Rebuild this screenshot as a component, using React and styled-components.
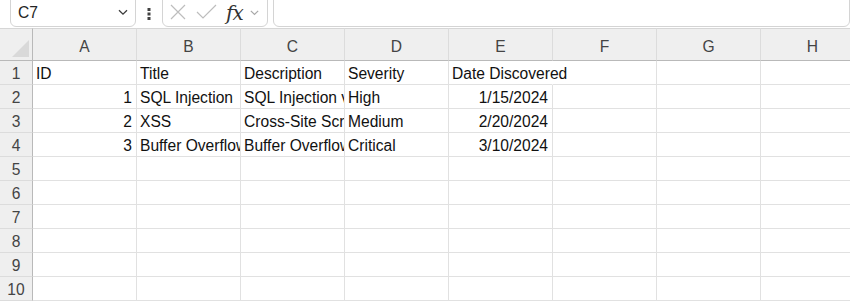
import React from 'react'
import styled, { createGlobalStyle } from 'styled-components'

const GlobalStyle = createGlobalStyle`
    html, body {
        margin: 0;
        padding: 0;
        background: #ffffff;
    }
    body {
        font-family: "Liberation Sans", Arial, sans-serif;
        width: 850px;
        height: 305px;
        overflow: hidden;
    }
`

const Page = styled.div`
    width: 850px;
    height: 305px;
    overflow: hidden;
    display: flex;
    flex-direction: column;
`

const Toolbar = styled.div`
    height: 28px;
    flex: none;
    display: flex;
    align-items: flex-end;
    padding: 0 0 1px 10px;
    box-sizing: border-box;
    overflow: hidden;
    background: #ffffff;
`

const Box = styled.div`
    height: 33px;
    box-sizing: border-box;
    border: 1px solid #d4d4d4;
    border-radius: 6px;
    background: #ffffff;
    display: flex;
    align-items: center;
    flex: ${props => props.grow ? '1' : 'none'};
    width: ${props => props.width ? props.width + 'px' : 'auto'};
    margin-right: ${props => props.gap || 0}px;
    padding: ${props => props.pad || '0'};
`

const NameText = styled.span`
    flex: 1;
    font-size: 15.6px;
    color: #242424;
    padding-top: 4px;
`

const Dots = styled.div`
    width: 26px;
    height: 27px;
    flex: none;
    display: flex;
    align-items: center;
    justify-content: center;
`

const Fx = styled.span`
    font-family: "DejaVu Serif", "Liberation Serif", serif;
    font-style: italic;
    font-size: 20px;
    color: #333333;
    margin: 2px 6px 0 9px;
    letter-spacing: -1px;
`

const Sheet = styled.div`
    display: grid;
    grid-template-columns: 33px repeat(8, 104px);
    grid-template-rows: 33px repeat(10, 24px);
    font-size: 15.6px;
`

const Corner = styled.div`
    background: #efefef;
    border-top: 1px solid #d6d6d6;
    border-right: 1px solid #b9b9b9;
    border-bottom: 1px solid #b9b9b9;
    box-sizing: border-box;
    display: flex;
    align-items: flex-end;
    justify-content: flex-end;
    padding: 0 3px 3px 0;
`

const ColHead = styled.div`
    background: #efefef;
    border-top: 1px solid #d6d6d6;
    border-right: 1px solid #dcdcdc;
    border-bottom: 1px solid #b9b9b9;
    box-sizing: border-box;
    color: #444444;
    display: flex;
    align-items: center;
    justify-content: center;
    padding-top: 5px;
`

const RowHead = styled.div`
    background: #efefef;
    border-right: 1px solid #b9b9b9;
    border-bottom: 1px solid #dcdcdc;
    box-sizing: border-box;
    color: #444444;
    display: flex;
    align-items: flex-end;
    justify-content: center;
    padding-bottom: 1px;
    line-height: 18px;
`

const Cell = styled.div`
    border-right: 1px solid ${props => props.spill ? 'transparent' : '#e1e1e1'};
    border-bottom: 1px solid #e1e1e1;
    box-sizing: border-box;
    white-space: nowrap;
    overflow: ${props => props.spill ? 'visible' : 'hidden'};
    position: relative;
    z-index: ${props => props.spill ? 1 : 0};
    color: #111111;
    display: flex;
    align-items: flex-end;
    justify-content: ${props => props.num ? 'flex-end' : 'flex-start'};
    padding: 0 4px 1px 3px;
    line-height: 18px;
`

const columns = ['A', 'B', 'C', 'D', 'E', 'F', 'G', 'H']

const data = [
    ['ID', 'Title', 'Description', 'Severity', 'Date Discovered'],
    [1, 'SQL Injection', 'SQL Injection vulnerability in login form', 'High', '1/15/2024'],
    [2, 'XSS', 'Cross-Site Scripting in comments', 'Medium', '2/20/2024'],
    [3, 'Buffer Overflow', 'Buffer Overflow in file parser', 'Critical', '3/10/2024'],
]

const isNum = (r, c) => r > 0 && (c === 0 || c === 4)

const Chevron = ({ color = '#3b3b3b', size = 12 }) => (
    <svg width={size} height={size} viewBox="0 0 12 12">
        <path d="M2 4.2 L6 8.2 L10 4.2" fill="none" stroke={color} strokeWidth="1.3" />
    </svg>
)

const App = () => (
    <Page>
        <GlobalStyle />
        <Toolbar>
            <Box width={126} pad="0 6px 0 7px">
                <NameText>C7</NameText>
                <span style={{ paddingTop: 4 }}><Chevron /></span>
            </Box>
            <Dots>
                <svg width="4" height="14" viewBox="0 0 4 14">
                    <rect x="0.5" y="1" width="3" height="3" fill="#424242" />
                    <rect x="0.5" y="5.5" width="3" height="3" fill="#424242" />
                    <rect x="0.5" y="10" width="3" height="3" fill="#424242" />
                </svg>
            </Dots>
            <Box width={106} gap={5} pad="3px 4px 0 6px">
                <svg width="18" height="18" viewBox="0 0 18 18">
                    <path d="M2 2 L16 16 M16 2 L2 16" stroke="#bdbdbd" strokeWidth="1.2" fill="none" />
                </svg>
                <svg width="21" height="18" viewBox="0 0 21 18" style={{ marginLeft: 9 }}>
                    <path d="M1 9 L7 15 L20 2" stroke="#bdbdbd" strokeWidth="1.2" fill="none" />
                </svg>
                <Fx>fx</Fx>
                <Chevron color="#a8a8a8" size={11} />
            </Box>
            <Box grow />
        </Toolbar>
        <Sheet>
            <Corner>
                <svg width="17" height="17" viewBox="0 0 17 17">
                    <polygon points="17,0 17,17 0,17" fill="#d9d9d9" />
                </svg>
            </Corner>
            {columns.map(c => <ColHead key={c}>{c}</ColHead>)}
            {Array.from({ length: 10 }, (_, r) => (
                <React.Fragment key={r}>
                    <RowHead>{r + 1}</RowHead>
                    {columns.map((c, ci) => {
                        const v = data[r] ? data[r][ci] : undefined
                        return (
                            <Cell key={c} num={isNum(r, ci)} spill={r === 0 && ci === 4}>
                                {v}
                            </Cell>
                        )
                    })}
                </React.Fragment>
            ))}
        </Sheet>
    </Page>
)

export default App
